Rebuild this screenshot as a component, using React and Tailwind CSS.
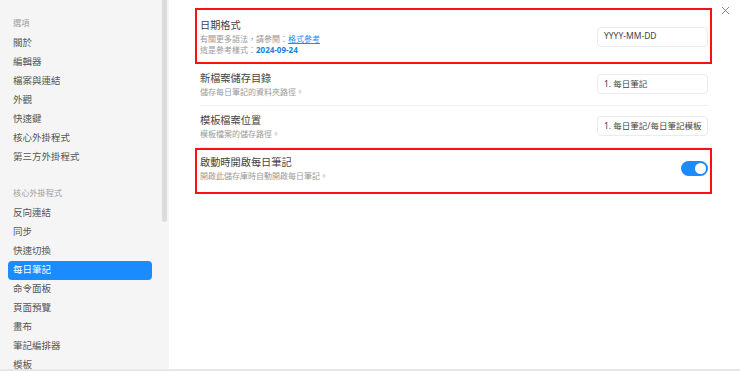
import { X } from "lucide-react"

const general = ["關於", "編輯器", "檔案與連結", "外觀", "快速鍵", "核心外掛程式", "第三方外掛程式"]
const corePlugins = ["反向連結", "同步", "快速切換", "每日筆記", "命令面板", "頁面預覽", "畫布", "筆記編排器", "模板"]

const font = { fontFamily: '"Noto Sans", "Noto Sans CJK TC", sans-serif' }

const NavItem = ({ label, active }) => (
  <div
    className={`ml-[8px] mr-[17px] px-[5px] h-[19px] flex items-center rounded-[4px] text-[9.5px] ${
      active ? "bg-[#1a8cff] text-white" : "text-[#555]"
    }`}
  >
    {label}
  </div>
)

const SettingRow = ({ title, children, control, last, highlight, boxClass }) => (
  <div className={`relative flex items-center justify-between pt-[7px] pb-[8px] ${last ? "" : "border-b border-[#efefef]"}`}>
    <div className="flex flex-col">
      <div className="text-[10.2px] leading-[14px] text-[#444]">{title}</div>
      <div className="mt-[1px] text-[8px] leading-[11px] text-[#999]">{children}</div>
    </div>
    {control}
    {highlight && <div className={`absolute border-2 border-[#ff1010] pointer-events-none ${boxClass}`} />}
  </div>
)

const TextInput = ({ value }) => (
  <div className="w-[111px] h-[20px] flex items-center px-[6px] rounded-[4px] border border-[#ebebeb] bg-white text-[8.5px] text-[#444] whitespace-nowrap overflow-hidden">
    {value}
  </div>
)

export default function App() {
  return (
    <div className="w-[740px] h-[371px] flex flex-col bg-white overflow-hidden" style={font}>
      <div className="flex flex-1 min-h-0">
        {/* Sidebar */}
        <div className="relative w-[169px] bg-[#f5f5f5] pt-[16px] shrink-0">
          <div className="px-[13px] h-[14px] leading-[14px] text-[8.2px] text-[#a0a0a0]">選項</div>
          <div className="mt-[4px]">
            {general.map((g) => (
              <NavItem key={g} label={g} />
            ))}
          </div>
          <div className="mt-[19px] px-[13px] h-[14px] leading-[14px] text-[8.2px] text-[#a0a0a0]">核心外掛程式</div>
          <div className="mt-[4px]">
            {corePlugins.map((g) => (
              <NavItem key={g} label={g} active={g === "每日筆記"} />
            ))}
          </div>
          {/* scrollbar */}
          <div className="absolute right-[2px] top-0 w-[5px] h-[222px] rounded-b-[3px] bg-[#dcdcdc]" />
        </div>

        {/* Main */}
        <div className="relative flex-1 pt-[11px] pl-[31px] pr-[32px]">
          <button className="absolute right-[8px] top-[4px] text-[#555]">
            <X size={13} strokeWidth={1.3} />
          </button>

          <SettingRow
            title="日期格式"
            control={<TextInput value="YYYY-MM-DD" />}
            highlight
            boxClass="-top-[3px] -left-[5px] -right-[4px] -bottom-[1px]"
          >
            <div>
              有關更多語法，請參閱：<span className="text-[#1a8cff] underline">格式參考</span>
            </div>
            <div>
              這是參考樣式：<span className="font-bold text-[#1a7fe0]">2024-09-24</span>
            </div>
          </SettingRow>

          <SettingRow title="新檔案儲存目錄" control={<TextInput value="1. 每日筆記" />}>
            儲存每日筆記的資料夾路徑。
          </SettingRow>

          <SettingRow title="模板檔案位置" control={<TextInput value="1. 每日筆記/每日筆記模板" />}>
            模板檔案的儲存路徑。
          </SettingRow>

          <SettingRow
            title="啟動時開啟每日筆記"
            last
            highlight
            boxClass="top-0 -left-[5px] -right-[4px] -bottom-[5px]"
            control={
              <div className="w-[27px] h-[15px] rounded-full bg-[#1a8cff] flex items-center justify-end px-[2px]">
                <div className="w-[11px] h-[11px] rounded-full bg-white" />
              </div>
            }
          >
            開啟此儲存庫時自動開啟每日筆記。
          </SettingRow>
        </div>
      </div>
      <div className="h-[2px] bg-[#e6e6e6]" />
    </div>
  )
}
